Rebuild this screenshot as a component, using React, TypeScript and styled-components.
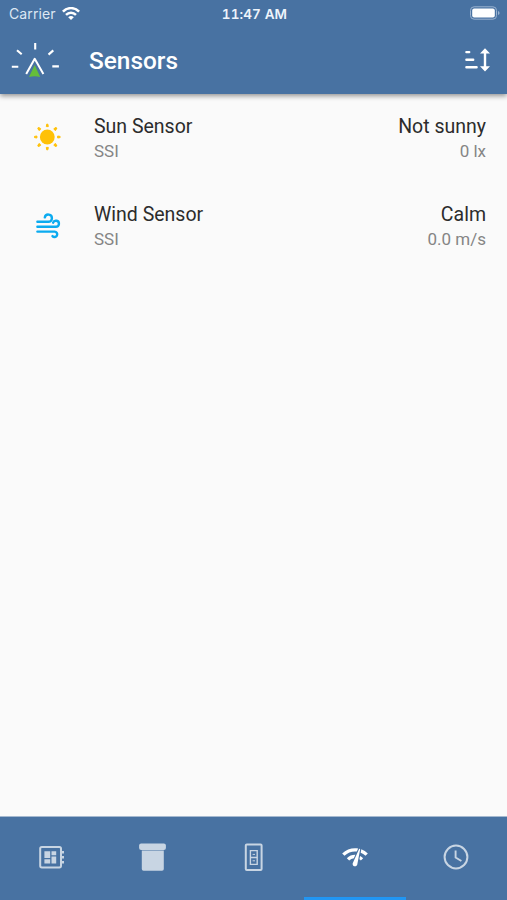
import React from "react";
import styled, { createGlobalStyle } from "styled-components";
import { MdNetworkCheck } from "react-icons/md";

const GlobalStyle = createGlobalStyle`
  * { box-sizing: border-box; }
  body { margin: 0; background: #fafafa; font-family: Roboto, sans-serif; }
`;

const Screen = styled.div`
  width: 100%;
  height: 100vh;
  display: flex;
  flex-direction: column;
  overflow: hidden;
  background: #fafafa;
`;

const Header = styled.header`
  height: 94px;
  flex: none;
  background: #4872a2;
  color: #fff;
  box-shadow: 0 2px 5px rgba(0, 0, 0, 0.42);
`;

const StatusBar = styled.div`
  height: 27px;
  display: grid;
  grid-template-columns: 1fr auto 1fr;
  align-items: center;
  padding: 0 7px 0 9px;
  font-family: Inter, sans-serif;
`;

const Carrier = styled.div`
  display: flex;
  align-items: center;
  gap: 6px;
  font-size: 14px;
  line-height: 26px;
  color: #dde7f3;
  letter-spacing: 0.1px;
`;

const Time = styled.div`
  font-size: 13.5px;
  font-weight: 600;
  line-height: 26px;
  padding-top: 1px;
  color: #eef4fb;
  font-variant-numeric: tabular-nums;
  letter-spacing: 0.1px;
`;

const BatterySlot = styled.div`
  display: flex;
  justify-content: flex-end;
  padding-bottom: 1px;
`;

const AppBar = styled.div`
  height: 67px;
  display: flex;
  align-items: center;
  padding: 0 14px 1px 9px;
`;

const Title = styled.h1`
  flex: 1;
  margin: 2px 0 0 28px;
  font-size: 24.4px;
  font-weight: 500;
  line-height: 32px;
`;

const List = styled.main`
  flex: 1;
`;

const Row = styled.div`
  height: 88px;
  display: grid;
  grid-template-columns: 60px 1fr auto;
  padding: 19px 21px 0 34px;
`;

const IconCell = styled.div`
  padding-top: 10px;
  svg { display: block; }
`;

const Column = styled.div<{ $end?: boolean }>`
  text-align: ${(p) => (p.$end ? "right" : "left")};
`;

const Primary = styled.div`
  padding-top: 1px;
  font-size: 19.5px;
  line-height: 25px;
  color: #2c2c2c;
`;

const Secondary = styled.div`
  font-size: 17px;
  line-height: 24px;
  color: #858585;
`;

const TabBar = styled.nav`
  height: 84px;
  flex: none;
  display: grid;
  grid-template-columns: repeat(5, 1fr);
  background: #4872a2;
  border-top: 1px solid #a5b9d0;
`;

const Tab = styled.div<{ $active?: boolean }>`
  display: flex;
  align-items: center;
  justify-content: center;
  color: ${(p) => (p.$active ? "#fff" : "#c8d5e3")};
  border-bottom: 3px solid ${(p) => (p.$active ? "#2196f3" : "transparent")};
  svg { display: block; }
`;

const Wifi = () => (
  <svg width="18" height="14" viewBox="0 .4 18 14" fill="none" stroke="#fff" strokeWidth="2.5">
    <path d="M.9 5.1C5.5.3 12.5.3 17.1 5.1" />
    <path d="M4 8.3c2.9-2.9 7.1-2.9 10 0" />
    <path d="M9 13.4 6.2 10.6c1.7-1.5 3.9-1.5 5.6 0z" fill="#fff" stroke="none" />
  </svg>
);

const Battery = () => (
  <svg width="31" height="14" viewBox="0 0 31 14">
    <rect x="1.5" y=".8" width="26" height="12.4" rx="3.6" fill="none" stroke="#9bb3d0" />
    <rect x="3.2" y="2.5" width="22.6" height="9" rx="2" fill="#fff" />
    <path d="M29 5v4q1.6-.6 1.6-2T29 5" fill="#9bb3d0" />
  </svg>
);

const Logo = () => (
  <svg width="52" height="40" viewBox="9 40 52 40" fill="none">
    <path
      d="M35.2 43v6.5M17 50.2l4.7 4M53.3 50.4l-4.8 4.2M11.8 66.8h6.5M52.3 66.4h6.6"
      stroke="#fff"
      strokeWidth="2.1"
    />
    <path d="M34.7 65 29 77q5.7-1.3 11.2 0z" fill="#65bd3b" />
    <path d="M26.2 74 34.7 58.8 43.4 74" stroke="#fff" strokeWidth="2" strokeLinejoin="round" />
  </svg>
);

const SortIcon = () => (
  <svg width="30" height="28" viewBox="463 46 30 28" fill="none" stroke="#fff" strokeWidth="2.4">
    <path d="M466.4 52.1h2.8M466.4 59.8h6.8M466.4 67.2h10.2" strokeLinecap="round" />
    <path d="M485 52v16" />
    <path d="M485 48.2l5 5.2h-10zM485 71.4l5-5.2h-10z" fill="#fff" stroke="none" />
  </svg>
);

const SunIcon = () => (
  <svg width="28" height="28" viewBox="-13.3 -14 28 28" fill="#ffc107">
    <circle r="7.4" />
    {[0, 45, 90, 135, 180, 225, 270, 315].map((a) => (
      <path
        key={a}
        transform={`rotate(${a})`}
        d="M-1-10.4h2L.6-12.8H-.6z"
        stroke="#ffc107"
        strokeWidth="1"
        strokeLinejoin="round"
      />
    ))}
  </svg>
);

const WindIcon = () => (
  <svg
    width="28"
    height="28"
    viewBox="34 211 28 28"
    fill="none"
    stroke="#0babf0"
    strokeWidth="2.4"
    strokeLinecap="round"
  >
    <path d="M37.4 221.8h10.9a3.6 3.6 0 1 0-3.5-4.4" />
    <path d="M37.4 226.7h18.5a3 3 0 1 0-2.8-4" />
    <path d="M37.4 231.6h17.2a2.7 2.7 0 1 1-2.1 4.5" />
  </svg>
);

const BoardIcon = () => (
  <svg width="28" height="28" viewBox="37 843 28 28" fill="currentColor">
    <rect x="40.2" y="847" width="20.8" height="20.4" rx="1.6" fill="none" stroke="currentColor" strokeWidth="2" />
    <path d="M61 851h3v2.4h-3zM61 856h3v2.4h-3zM61 861h3v2.4h-3zM44.4 851.2h5.8v6.7h-5.8zM51.5 851.2h4.7v4h-4.7zM44.4 859.2h5.8v4.2h-5.8zM51.5 856.6h4.7v6.8h-4.7z" />
  </svg>
);

const ShutterIcon = () => (
  <svg width="28" height="28" viewBox="138.2 843 28 28" fill="currentColor">
    <rect x="139.3" y="843.6" width="26.8" height="6.4" rx="2" />
    <path d="M142 850.4h22v18.6q0 1.8-1.8 1.8h-18.4q-1.8 0-1.8-1.8z" />
  </svg>
);

const SwitchIcon = () => (
  <svg width="20" height="28" viewBox="243.2 843 20 28" fill="none" stroke="currentColor">
    <rect x="246" y="844.6" width="15.8" height="25.4" rx="1" strokeWidth="2" />
    <path d="M250.6 850.6h6.8v13.8h-6.8zM250.6 857.5h6.8" strokeWidth="1.4" />
    <path d="M252.8 854.4h2.4M252.8 860.8h2.4" strokeWidth="1" />
  </svg>
);

const ClockIcon = () => (
  <svg width="28" height="28" viewBox="-14 -14 28 28" fill="none" stroke="currentColor">
    <circle r="11.4" strokeWidth="2" />
    <path d="M-.4-6.4V.5L5.4 4" strokeWidth="1.9" />
  </svg>
);

const sensors = [
  { name: "Sun Sensor", source: "SSI", state: "Not sunny", reading: "0 lx", Icon: SunIcon },
  { name: "Wind Sensor", source: "SSI", state: "Calm", reading: "0.0 m/s", Icon: WindIcon },
];

export default function App() {
  return (
    <>
      <GlobalStyle />
      <Screen>
        <Header>
          <StatusBar>
            <Carrier>
              Carrier
              <Wifi />
            </Carrier>
            <Time>11:47 AM</Time>
            <BatterySlot>
              <Battery />
            </BatterySlot>
          </StatusBar>
          <AppBar>
            <Logo />
            <Title>Sensors</Title>
            <SortIcon />
          </AppBar>
        </Header>
        <List>
          {sensors.map(({ name, source, state, reading, Icon }) => (
            <Row key={name}>
              <IconCell>
                <Icon />
              </IconCell>
              <Column>
                <Primary>{name}</Primary>
                <Secondary>{source}</Secondary>
              </Column>
              <Column $end>
                <Primary>{state}</Primary>
                <Secondary>{reading}</Secondary>
              </Column>
            </Row>
          ))}
        </List>
        <TabBar>
          <Tab><BoardIcon /></Tab>
          <Tab><ShutterIcon /></Tab>
          <Tab><SwitchIcon /></Tab>
          <Tab $active><MdNetworkCheck size={28} /></Tab>
          <Tab><ClockIcon /></Tab>
        </TabBar>
      </Screen>
    </>
  );
}
